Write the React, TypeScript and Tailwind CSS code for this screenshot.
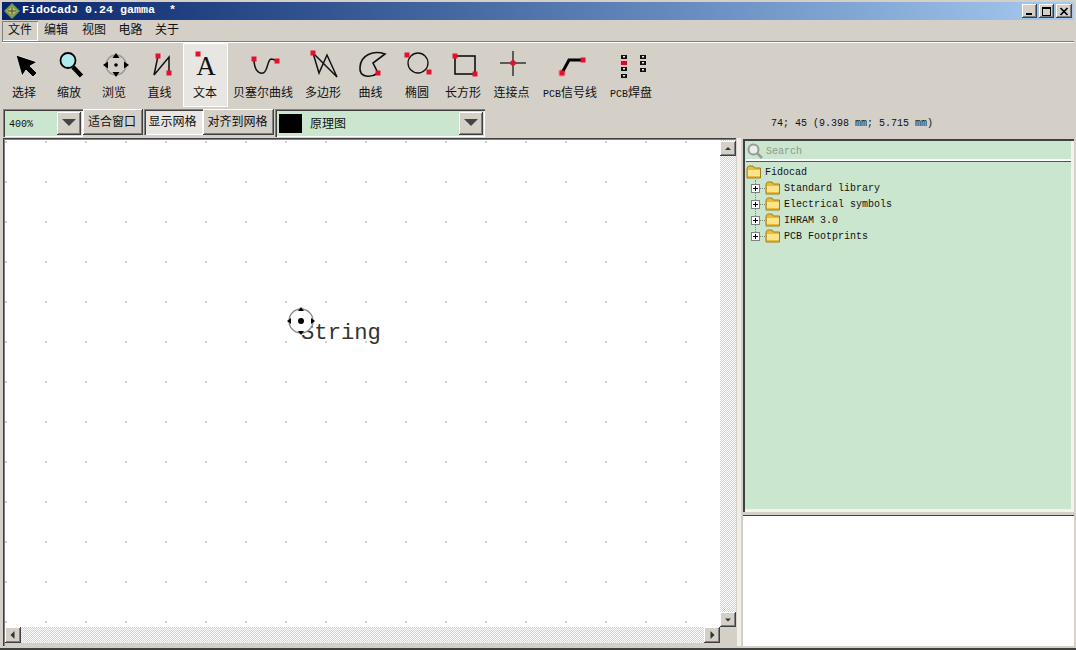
import React from "react";

const raised = "shadow-[inset_-1px_-1px_0_#404040,inset_1px_1px_0_#ffffff,inset_-2px_-2px_0_#808080]";
const sunken = "shadow-[inset_1px_1px_0_#808080,inset_2px_2px_0_#404040,inset_-1px_-1px_0_#ffffff]";
const dither = "bg-[repeating-conic-gradient(#d4d0c8_0_25%,#ffffff_0_50%)] bg-[length:2px_2px]";

const Dot = ({ x, y }: { x: number; y: number }) => (
  <rect x={x - 2.5} y={y - 2.5} width={5} height={5} fill="#e5102e" />
);

const Pad = ({ x, y, red }: { x: number; y: number; red?: boolean }) => (
  <g>
    <rect x={x - 3} y={y - 2} width={6} height={4} fill={red ? "#c8102e" : "#111"} />
    {!red && <rect x={x - 1} y={y - 1} width={2} height={1.5} fill="#eee" />}
  </g>
);

const icons: Record<string, React.ReactNode> = {
  select: (
    <polygon
      points="7,6 28,13 21,17 28,24 24,28 17,21 13,27"
      fill="#000"
      stroke="#fff"
      strokeWidth="0.7"
    />
  ),
  zoom: (
    <>
      <line x1="19" y1="18" x2="27.5" y2="27" stroke="#000" strokeWidth="4.5" />
      <circle cx="14" cy="11.5" r="7.5" fill="#aeeaee" stroke="#000" strokeWidth="1.8" />
    </>
  ),
  pan: (
    <>
      <circle cx="17" cy="16" r="10" fill="none" stroke="#9a9a9a" strokeWidth="1.5" />
      <circle cx="17" cy="16" r="1.8" fill="#000" />
      <polygon points="17,4 13.5,9 20.5,9" fill="#000" />
      <polygon points="17,28 13.5,23 20.5,23" fill="#000" />
      <polygon points="4,16 9,12.5 9,19.5" fill="#000" />
      <polygon points="30,16 25,12.5 25,19.5" fill="#000" />
    </>
  ),
  line: (
    <>
      <polyline points="14,7 10,26 25,8 25,24" fill="none" stroke="#111" strokeWidth="1.5" />
      <Dot x={14} y={7} />
      <Dot x={25} y={24} />
    </>
  ),
  text: (
    <>
      <text x="16" y="26" textAnchor="middle" fontSize="27" fontFamily="Liberation Serif, serif" fill="#111">
        A
      </text>
      <Dot x={8} y={5} />
    </>
  ),
  bezier: (
    <>
      <path d="M6 10C6 20 10 25 15 24C20 23 19 11 23 10C25 10 27 11 29 12" fill="none" stroke="#111" strokeWidth="1.5" />
      <Dot x={6} y={10} />
      <Dot x={29} y={12} />
    </>
  ),
  polygon: (
    <>
      <polygon points="5,4 11,24 19,6 29,28" fill="none" stroke="#111" strokeWidth="1.5" />
      <Dot x={5} y={4} />
    </>
  ),
  curve: (
    <>
      <path d="M30 5C18 1 6 6 5 18C4 29 16 29 23 24L18 14Z" fill="none" stroke="#111" strokeWidth="1.6" />
      <Dot x={23} y={24} />
    </>
  ),
  ellipse: (
    <>
      <circle cx="16" cy="14" r="10" fill="none" stroke="#111" strokeWidth="1.3" />
      <Dot x={5} y={6} />
      <Dot x={27} y={23} />
    </>
  ),
  rect: (
    <>
      <rect x="7" y="7" width="20" height="18" fill="none" stroke="#111" strokeWidth="1.6" />
      <Dot x={7} y={7} />
      <Dot x={27} y={25} />
    </>
  ),
  junction: (
    <>
      <line x1="4" y1="14" x2="30" y2="14" stroke="#333" strokeWidth="1.5" />
      <line x1="17" y1="2" x2="17" y2="27" stroke="#333" strokeWidth="1.5" />
      <circle cx="17" cy="14" r="2.8" fill="#e5102e" />
    </>
  ),
  pcbline: (
    <>
      <circle cx="7" cy="24" r="4" fill="#eda0a8" />
      <polyline points="7,24 14,11 28,11" fill="none" stroke="#000" strokeWidth="3" />
      <Dot x={7} y={24} />
      <Dot x={28} y={11} />
    </>
  ),
  pcbpad: (
    <>
      <Pad x={8} y={8} />
      <circle cx="8" cy="14" r="4" fill="#f1b4ba" />
      <Pad x={8} y={14} red />
      <Pad x={8} y={20} />
      <Pad x={8} y={27} />
      <Pad x={27} y={8} />
      <Pad x={27} y={14} />
      <Pad x={27} y={21} />
    </>
  ),
};

const tools = [
  { icon: "select", label: "选择", w: "w-[45px]" },
  { icon: "zoom", label: "缩放", w: "w-[45px]" },
  { icon: "pan", label: "浏览", w: "w-[45px]" },
  { icon: "line", label: "直线", w: "w-[46px]" },
  { icon: "text", label: "文本", w: "w-[45px]", active: true },
  { icon: "bezier", label: "贝塞尔曲线", w: "w-[71px]" },
  { icon: "polygon", label: "多边形", w: "w-[49px]" },
  { icon: "curve", label: "曲线", w: "w-[46px]" },
  { icon: "ellipse", label: "椭圆", w: "w-[47px]" },
  { icon: "rect", label: "长方形", w: "w-[45px]" },
  { icon: "junction", label: "连接点", w: "w-[52px]" },
  { icon: "pcbline", label: "信号线", latin: "PCB", w: "w-[65px]" },
  { icon: "pcbpad", label: "焊盘", latin: "PCB", w: "w-[57px]" },
];

const menus = [
  { label: "文件", w: "w-[36px] shadow-[inset_1px_1px_0_#808080,inset_-1px_-1px_0_#ffffff]" },
  { label: "编辑", w: "w-[36px]" },
  { label: "视图", w: "w-[40px]" },
  { label: "电路", w: "w-[33px]" },
  { label: "关于", w: "w-[40px]" },
];

const Folder = () => (
  <svg width="16" height="14" viewBox="0 0 16 14" className="shrink-0">
    <path d="M1 3L2.5 1H7L8.5 3H14.5V13H1Z" fill="#e8bc3c" stroke="#a07c1c" />
    <path d="M2 5H14V12H2Z" fill="#fbe588" />
    <path d="M2 11H14V12H2Z" fill="#e8bc3c" />
  </svg>
);

const ArrowBtn = ({ dir, className }: { dir: "up" | "down" | "left" | "right"; className: string }) => {
  const pts = {
    up: "2,6 8,6 5,3",
    down: "2,3.5 8,3.5 5,6.5",
    left: "6.5,1 6.5,9 2.5,5",
    right: "3.5,1 3.5,9 7.5,5",
  }[dir];
  return (
    <div className={`flex items-center justify-center bg-[#d4d0c8] ${raised} ${className}`}>
      <svg width="10" height="10" viewBox="0 0 10 10">
        <polygon points={pts} fill="#333" />
      </svg>
    </div>
  );
};

const ComboArrow = () => (
  <div className={`mr-[2px] flex h-[23px] w-[24px] items-center justify-center bg-[#d4d0c8] ${raised}`}>
    <svg width="16" height="8" viewBox="0 0 16 8">
      <polygon points="1,0 15,0 8,7" fill="#444" />
    </svg>
  </div>
);

const TreeRow = ({ label }: { label: string }) => (
  <div className="flex h-[16px] items-center">
    <div className="relative ml-[5px] flex h-[9px] w-[9px] shrink-0 items-center justify-center border border-[#808080] bg-white">
      <div className="absolute h-px w-[5px] bg-black" />
      <div className="absolute h-[5px] w-px bg-black" />
    </div>
    <div className="h-px w-[5px] border-t border-dotted border-[#808080]" />
    <Folder />
    <span className="ml-[3px]">{label}</span>
  </div>
);

export default function App() {
  return (
    <div className="flex h-[650px] w-[1076px] flex-col overflow-hidden bg-[#d4d0c8] font-['Liberation_Mono','Noto_Sans_CJK_SC',monospace] text-[10px] text-[#111]">
      {/* title bar */}
      <div className="mx-[2px] mt-[2px] flex h-[18px] items-center bg-gradient-to-r from-[#0a246a] to-[#a6caf0] pl-[2px] pr-[2px]">
        <svg width="16" height="16" viewBox="0 0 16 16" className="shrink-0">
          <polygon points="8,0 16,8 8,16 0,8" fill="#6f9a5a" />
          <polygon points="8,3 13,8 8,13 3,8" fill="#c9b45a" />
          <path d="M4 8H12M8 4V12" stroke="#2f5a3a" />
        </svg>
        <span className="ml-[2px] whitespace-pre text-[11.67px] font-bold text-white">FidoCadJ 0.24 gamma  *</span>
        <div className="ml-auto flex gap-[2px]">
          <div className={`relative h-[14px] w-[15px] bg-[#d4d0c8] ${raised}`}>
            <div className="absolute bottom-[3px] left-[4px] h-[2px] w-[6px] bg-black" />
          </div>
          <div className={`flex h-[14px] w-[15px] items-center justify-center bg-[#d4d0c8] ${raised}`}>
            <div className="h-[9px] w-[9px] border border-t-2 border-black" />
          </div>
          <div className={`flex h-[14px] w-[16px] items-center justify-center bg-[#d4d0c8] ${raised}`}>
            <svg width="10" height="9" viewBox="0 0 10 9">
              <path d="M1.5 1L8.5 8M8.5 1L1.5 8" stroke="#000" strokeWidth="1.7" />
            </svg>
          </div>
        </div>
      </div>

      {/* menu */}
      <div className="flex h-[21px] items-center pl-[2px] text-[12px]">
        {menus.map((m) => (
          <div key={m.label} className={`flex h-[20px] items-center justify-center ${m.w}`}>
            {m.label}
          </div>
        ))}
      </div>
      <div className="mx-[2px] h-[2px] border-t border-b border-t-[#808080] border-b-white" />

      {/* tools */}
      <div className="flex h-[64px] pl-[2px]">
        {tools.map((t) => (
          <div
            key={t.icon}
            className={`flex flex-col items-center pt-[6px] ${t.w} ${
              t.active ? "bg-[#e8e6e2] shadow-[inset_1px_1px_0_#ffffff,inset_-1px_-1px_0_#ffffff]" : ""
            }`}
          >
            <svg width="32" height="32" viewBox="0 0 32 32">
              {icons[t.icon]}
            </svg>
            <div className="mr-[1px] mt-[5px] h-[16px] whitespace-nowrap text-[12px] leading-[16px]">
              {t.latin && <span className="text-[10px]">{t.latin}</span>}
              {t.label}
            </div>
          </div>
        ))}
      </div>

      {/* options row */}
      <div className="flex h-[31px] items-start pl-[3px] pt-[2px]">
        <div className={`flex h-[28px] w-[80px] items-center justify-between bg-[#cbe6cf] pl-[6px] ${sunken}`}>
          <span className="pt-[2px]">400%</span>
          <ComboArrow />
        </div>
        <div className={`flex h-[26px] w-[60px] items-center justify-center pr-[2px] pt-[2px] text-[12px] ${raised}`}>
          适合窗口
        </div>
        <div className={`ml-px flex h-[26px] w-[59px] items-center justify-center bg-[#e8e6e2] pr-[2px] pt-[2px] text-[12px] ${sunken}`}>
          显示网格
        </div>
        <div className={`flex h-[26px] w-[71px] items-center justify-center pr-[2px] pt-[2px] text-[12px] ${raised}`}>
          对齐到网格
        </div>
        <div className={`ml-px flex h-[28px] w-[210px] items-center bg-[#cbe6cf] pl-[4px] ${sunken}`}>
          <div className="h-[19px] w-[23px] bg-black" />
          <span className="ml-[8px] pt-[3px] text-[12px]">原理图</span>
          <div className="ml-auto">
            <ComboArrow />
          </div>
        </div>
        <span className="ml-[286px] self-center whitespace-pre pb-[1px]">74; 45 (9.398 mm; 5.715 mm)</span>
      </div>

      {/* main area */}
      <div className="flex h-[508px] pl-[3px] pr-[2px]">
        <div className="flex w-[733px] flex-col pl-[2px] pt-[2px] shadow-[inset_1px_1px_0_#404040,inset_2px_2px_0_#808080]">
          <div className="flex min-h-0 flex-1">
            <div className="relative flex-1 overflow-hidden bg-white bg-[radial-gradient(circle_at_1px_2px,#999999_0.6px,transparent_0.8px)] bg-[length:40px_40px]">
              <span className="absolute left-[296px] top-[181px] text-[22.2px] leading-[26px] font-light text-[#333]">String</span>
              <svg width="28" height="32" viewBox="0 0 28 32" className="absolute left-[282px] top-[165px]">
                <circle cx="14" cy="16" r="12" fill="#fff" stroke="#888" strokeWidth="1.3" />
                <circle cx="14" cy="16" r="3" fill="#000" />
                <polygon points="14,2 11,6 17,6" fill="#000" />
                <polygon points="14,30 11,26 17,26" fill="#000" />
                <polygon points="0,16 4,13 4,19" fill="#000" />
                <polygon points="28,16 24,13 24,19" fill="#000" />
              </svg>
            </div>
            <div className={`flex w-[16px] flex-col justify-between pt-[1px] ${dither}`}>
              <ArrowBtn dir="up" className="h-[15px] w-[16px]" />
              <ArrowBtn dir="down" className="h-[15px] w-[16px]" />
            </div>
          </div>
          <div className="flex h-[16px]">
            <div className={`flex flex-1 justify-between ${dither}`}>
              <ArrowBtn dir="left" className="h-[16px] w-[16px]" />
              <ArrowBtn dir="right" className="h-[16px] w-[16px]" />
            </div>
            <div className="w-[16px]" />
          </div>
          <div className="h-[3px]" />
        </div>

        {/* splitter strip */}
        <div className="ml-px w-[4px] bg-[#f0eee8]" />
        <div className="ml-[2px] flex flex-1 flex-col">
          <div className="mt-px flex h-[373px] flex-col bg-[#cbe6cf] pb-[3px] pl-[3px] pr-[3px] pt-[3px] shadow-[inset_2px_2px_0_#404040,inset_-3px_-3px_0_#f5f3ee]">
            <div className="flex h-[19px] shrink-0 items-center border-b-2 border-b-white shadow-[0_1px_0_#555555]">
              <svg width="18" height="18" viewBox="0 0 18 18" className="shrink-0">
                <circle cx="7.5" cy="7.5" r="5" fill="#e8f0ea" stroke="#9a9a9a" strokeWidth="2" />
                <line x1="11" y1="11" x2="16" y2="16" stroke="#9a9a9a" strokeWidth="2.5" />
              </svg>
              <span className="ml-[2px] pt-[1px] text-[#8c9a8e]">Search</span>
            </div>
            <div className="relative pt-[3px]">
              <div className="absolute left-[9px] top-[19px] h-[52px] border-l border-dotted border-[#808080]" />
              <div className="flex h-[16px] items-center">
                <Folder />
                <span className="ml-[3px]">Fidocad</span>
              </div>
              <TreeRow label="Standard library" />
              <TreeRow label="Electrical symbols" />
              <TreeRow label="IHRAM 3.0" />
              <TreeRow label="PCB Footprints" />
            </div>
          </div>
          <div className="h-[4px] border-b border-b-[#404040]" />
          <div className="flex-1 bg-white" />
        </div>
      </div>

      <div className="mt-[2px] h-[2px] bg-[#404040]" />
    </div>
  );
}
